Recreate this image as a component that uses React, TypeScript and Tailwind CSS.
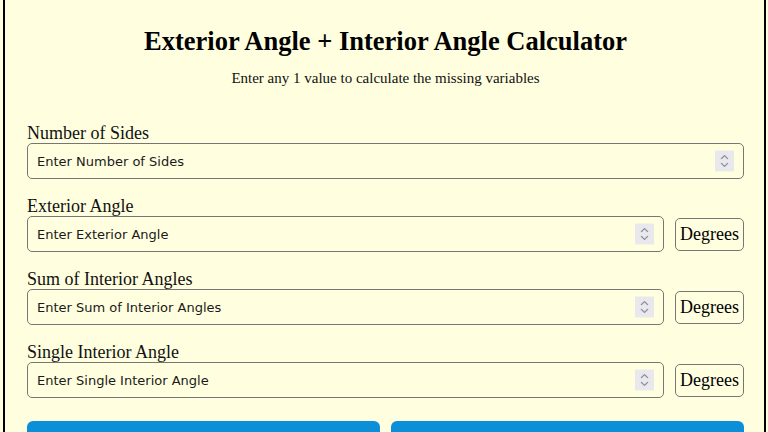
import { useState } from 'react'

const fields = [
  { key: 'sides', label: 'Number of Sides', unit: false },
  { key: 'exterior', label: 'Exterior Angle', unit: true },
  { key: 'sum', label: 'Sum of Interior Angles', unit: true },
  { key: 'interior', label: 'Single Interior Angle', unit: true },
]

function Spinner() {
  return (
    <div className="absolute right-[10px] top-1/2 -translate-y-1/2 w-[19px] h-[21px] bg-[#e9e9ed] flex flex-col items-center justify-center gap-[3px]">
      <svg width="9" height="5" viewBox="0 0 9 5" fill="none" stroke="#8f8f9d" strokeWidth="1.2">
        <path d="M1 4.5 L4.5 1 L8 4.5" />
      </svg>
      <svg width="9" height="5" viewBox="0 0 9 5" fill="none" stroke="#8f8f9d" strokeWidth="1.2">
        <path d="M1 0.5 L4.5 4 L8 0.5" />
      </svg>
    </div>
  )
}

export default function App() {
  const [values, setValues] = useState<Record<string, string>>({})

  return (
    <div className="min-h-screen bg-[#ffffe0] pl-[3px] pr-[2px]" style={{ fontFamily: '"Liberation Serif", serif' }}>
      <div className="min-h-screen border-x-2 border-black pl-[22px] pr-[20px] pt-[27px] pb-6">
        <h1 className="text-center text-[26.5px] leading-[28px] font-bold text-black">
          Exterior Angle + Interior Angle Calculator
        </h1>
        <p className="mt-[13px] text-center text-[15px] leading-[20px] text-[#111]">
          Enter any 1 value to calculate the missing variables
        </p>

        <div className="mt-[35px] flex flex-col gap-[17px]">
          {fields.map((f) => (
            <div key={f.key}>
              <label className="block text-[18px] leading-[20px] text-[#111]">{f.label}</label>
              <div className="flex items-center gap-[11px]">
                <div className="relative flex-1">
                  <input
                    type="text"
                    value={values[f.key] ?? ''}
                    onChange={(e) => setValues({ ...values, [f.key]: e.target.value })}
                    placeholder={`Enter ${f.label}`}
                    className="w-full h-[36px] rounded-[5px] border border-[#767676] bg-transparent pl-[9px] pr-10 text-[13px] text-[#111] placeholder:text-[#1a1a1a] outline-none"
                    style={{ fontFamily: '"DejaVu Sans", "Liberation Sans", sans-serif' }}
                  />
                  <Spinner />
                </div>
                {f.unit && (
                  <button className="h-[33px] w-[69px] rounded-[5px] border border-[#767676] bg-transparent text-[18px] text-black">
                    Degrees
                  </button>
                )}
              </div>
            </div>
          ))}
        </div>

        {/* action buttons; their labels sit below the visible area */}
        <div className="mt-[23px] grid grid-cols-2 gap-[11px]">
          <button className="h-[60px] rounded-[6px] bg-[#0b8fd8] text-white text-[18px]">Calculate</button>
          <button className="h-[60px] rounded-[6px] bg-[#0b8fd8] text-white text-[18px]">Clear</button>
        </div>
      </div>
    </div>
  )
}
